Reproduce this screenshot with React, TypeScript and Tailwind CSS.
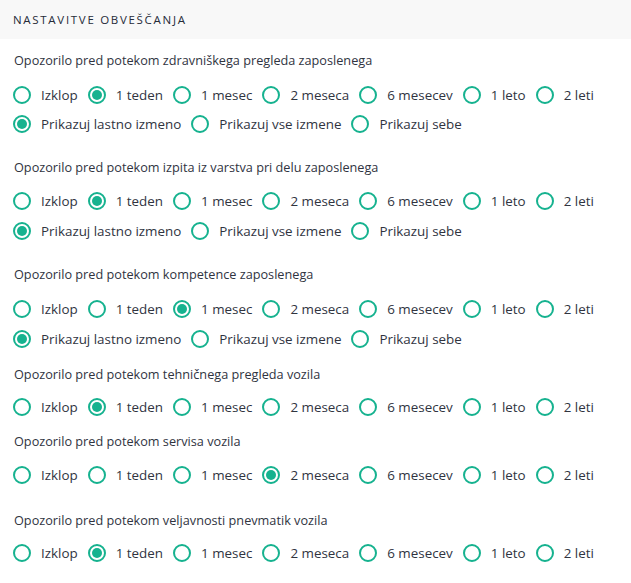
import React from "react";

const periods = ["Izklop", "1 teden", "1 mesec", "2 meseca", "6 mesecev", "1 leto", "2 leti"];
const views = ["Prikazuj lastno izmeno", "Prikazuj vse izmene", "Prikazuj sebe"];

type Section = { title: string; sel: number; view: boolean; mt: string; rmt: string; gap: string };

const sections: Section[] = [
  { title: "Opozorilo pred potekom zdravniškega pregleda zaposlenega", sel: 1, view: true, mt: "mt-[11px]", rmt: "mt-[13px]", gap: "mt-[5px]" },
  { title: "Opozorilo pred potekom izpita iz varstva pri delu zaposlenega", sel: 1, view: true, mt: "mt-[21px]", rmt: "mt-[12px]", gap: "mt-[6px]" },
  { title: "Opozorilo pred potekom kompetence zaposlenega", sel: 2, view: true, mt: "mt-[21px]", rmt: "mt-[13px]", gap: "mt-[6px]" },
  { title: "Opozorilo pred potekom tehničnega pregleda vozila", sel: 1, view: false, mt: "mt-[13px]", rmt: "mt-[11px]", gap: "" },
  { title: "Opozorilo pred potekom servisa vozila", sel: 3, view: false, mt: "mt-[12px]", rmt: "mt-[12px]", gap: "" },
  { title: "Opozorilo pred potekom veljavnosti pnevmatik vozila", sel: 1, view: false, mt: "mt-[23px]", rmt: "mt-[11px]", gap: "" },
];

function Radio({ checked, label }: { checked: boolean; label: string }) {
  return (
    <label className="flex items-center gap-[10px] h-6">
      <span className="w-[18px] h-[18px] rounded-full border-2 border-[#16b28f] flex items-center justify-center shrink-0">
        {checked && <span className="w-[10px] h-[10px] rounded-full bg-[#16b28f]" />}
      </span>
      <span>{label}</span>
    </label>
  );
}

export default function App() {
  return (
    <div className="w-[631px] h-[583px] bg-white text-[#30343f] overflow-hidden" style={{ fontFamily: "'Open Sans', sans-serif" }}>
      <div className="h-[39px] bg-[#f8f8f8] flex items-center pl-[13px]">
        <span className="text-[11.5px] tracking-[1.7px] uppercase text-[#262b38] font-medium">Nastavitve obveščanja</span>
      </div>
      <div className="pl-[13px]">
        {sections.map((s, i) => (
          <div key={i} className={s.mt}>
            <div className="h-5 leading-5 pl-px text-[12.7px]">{s.title}</div>
            <div className={`${s.rmt} flex gap-[10px] text-[13.4px]`}>
              {periods.map((p, j) => (
                <Radio key={j} checked={j === s.sel} label={p} />
              ))}
            </div>
            {s.view && (
              <div className={`${s.gap} flex gap-[10px] text-[13.4px]`}>
                {views.map((v, j) => (
                  <Radio key={j} checked={j === 0} label={v} />
                ))}
              </div>
            )}
          </div>
        ))}
      </div>
    </div>
  );
}
